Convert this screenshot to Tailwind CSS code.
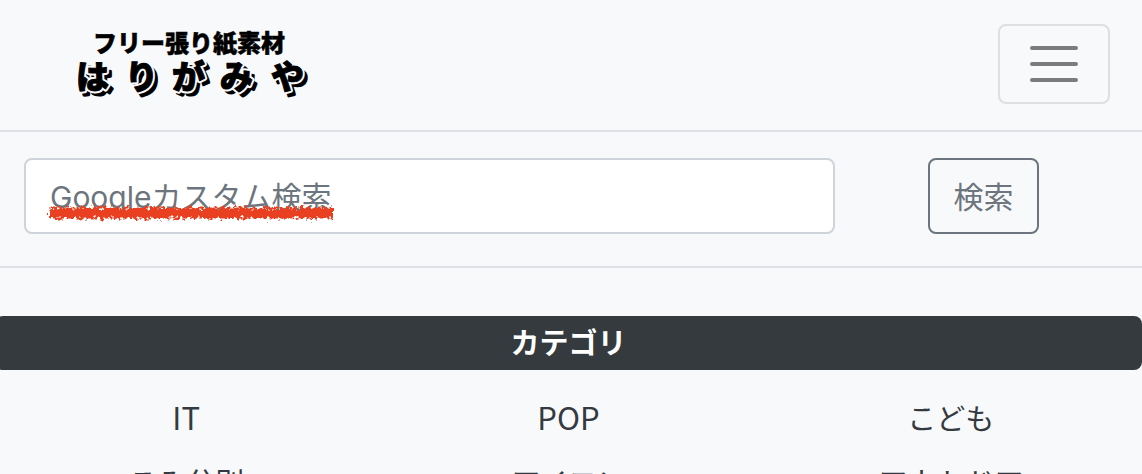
<!DOCTYPE html>
<html lang="ja">
<head>
    <meta charset="UTF-8" />
    <meta name="viewport" content="width=device-width, initial-scale=1.0" />
    <title>はりがみや</title>
    <script src="https://cdn.jsdelivr.net/npm/@tailwindcss/browser@4"></script>
</head>
<body class="bg-[#f8f9fb] text-[#343a40] text-[29px] font-['Noto_Sans_CJK_JP',sans-serif]">
    <!-- Header -->
    <header class="flex items-center justify-between h-[132px] pb-0.5 pl-[76px] pr-8 border-b-2 border-[#dee2e6]">
        <a href="#" aria-label="フリー張り紙素材 はりがみや">
            <svg class="block w-[236px] h-[80px] text-black" viewBox="0 0 236 80" fill="currentColor" font-weight="900">
                <text x="17" y="28" font-size="24" stroke="#000" stroke-width="0.5">フリー張り紙素材</text>
                <g font-size="33" stroke-linejoin="round">
                    <text x="4 53 100 148 199" y="69" stroke="#000" stroke-width="3">はりがみや</text>
                    <text x="0 49 96 144 195" y="65" stroke="#f8f9fb" stroke-width="5">はりがみや</text>
                    <text x="0 49 96 144 195" y="65" stroke="#000" stroke-width="1">はりがみや</text>
                </g>
            </svg>
        </a>
        <button type="button" aria-label="メニュー" class="flex items-center justify-center w-28 h-20 rounded-lg border-2 border-[#dedfe1]">
            <svg class="w-[60px] h-[60px]" viewBox="0 0 30 30" fill="none" stroke="#7c7c7d" stroke-width="2" stroke-linecap="round" stroke-miterlimit="10">
                <path d="M4 7h22M4 15h22M4 23h22" />
            </svg>
        </button>
    </header>

    <!-- Search -->
    <form class="flex h-[136px] pt-[26px] px-6 border-b-2 border-[#dee2e6]">
        <div class="relative flex-1 h-[76px]">
            <label for="search" class="sr-only">検索</label>
            <input id="search" type="text" placeholder="Googleカスタム検索" class="w-full h-full px-6 pt-0.5 rounded-lg bg-white border-2 border-[#ced4da] text-[30px] font-[Inter,'Noto_Sans_CJK_JP',sans-serif] placeholder:text-[#6c757d]" />
            <svg class="absolute left-5 top-[44px] w-[294px] h-[21px]" viewBox="0 0 294 21" fill="none" aria-hidden="true">
                <defs>
                    <filter id="crayon" x="0" y="0" width="294" height="21" filterUnits="userSpaceOnUse">
                        <feTurbulence type="fractalNoise" baseFrequency="0.3" numOctaves="2" seed="4" />
                        <feDisplacementMap in="SourceGraphic" scale="11" xChannelSelector="R" yChannelSelector="G" />
                    </filter>
                </defs>
                <g filter="url(#crayon)">
                    <path d="M5 11h284" stroke="#ea4024" stroke-width="11" />
                </g>
            </svg>
        </div>
        <button type="submit" class="ml-[93px] mr-[79px] w-[111px] h-[76px] pb-0.5 rounded-lg border-2 border-[#6c757d] text-[#6c757d] text-[30px]">検索</button>
    </form>

    <!-- Categories -->
    <main class="pt-12 -ml-[5px]">
        <h2 class="h-[54px] rounded-lg bg-[#343a3e] text-white text-center font-bold leading-[50px]">カテゴリ</h2>
        <ul class="grid grid-cols-3 pt-[15px] text-center leading-[64px]">
            <li class="text-[31px]"><a href="#">IT</a></li>
            <li class="text-[31px]"><a href="#">POP</a></li>
            <li><a href="#">こども</a></li>
            <li><a href="#">こみ分別</a></li>
            <li><a href="#">アイコン</a></li>
            <li><a href="#">アウトドア</a></li>
        </ul>
    </main>
</body>
</html>
